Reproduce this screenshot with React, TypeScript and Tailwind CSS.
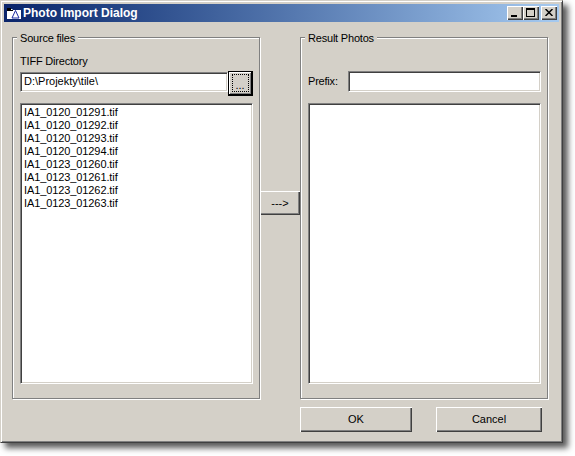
const sunken =
  'border border-t-[#808080] border-l-[#808080] border-b-white border-r-white shadow-[inset_1px_1px_0_#404040,inset_-1px_-1px_0_#d4d0c8]';

const raised = 'bg-[#d4d0c8] shadow-[inset_1px_1px_0_#fff,inset_-1px_-1px_0_#404040,inset_-2px_-2px_0_#808080]';

const files = [
  'IA1_0120_01291.tif',
  'IA1_0120_01292.tif',
  'IA1_0120_01293.tif',
  'IA1_0120_01294.tif',
  'IA1_0123_01260.tif',
  'IA1_0123_01261.tif',
  'IA1_0123_01262.tif',
  'IA1_0123_01263.tif',
];

function CaptionButton({ children, className = '' }: { children: React.ReactNode; className?: string }) {
  return <div className={`flex h-[14px] w-[16px] items-center justify-center ${raised} ${className}`}>{children}</div>;
}

function Group({ title, children }: { title: string; children: React.ReactNode }) {
  return (
    <div className="h-[362px] w-[248px] shrink-0 border border-[#808080] shadow-[inset_1px_1px_0_#fff,1px_1px_0_#fff]">
      <div className="-mt-[6px] ml-[4px] h-[13px] w-fit bg-[#d4d0c8] px-[3px] text-[11px] leading-[13px] tracking-[-0.2px]">{title}</div>
      {children}
    </div>
  );
}

export default function App() {
  return (
    <div className="h-[456px] w-[575px] bg-white font-['Liberation_Sans',sans-serif] text-[11px] text-black">
      <div className="h-[443px] w-[563px] border border-t-[#d4d0c8] border-r-[#404040] border-b-[#404040] border-l-[#d4d0c8] bg-[#d4d0c8] p-[3px] shadow-[inset_1px_1px_0_#fff,inset_-1px_-1px_0_#808080,5px_5px_6px_#5a5a5a]">
        {/* title bar */}
        <div className="flex h-[18px] items-center bg-gradient-to-r from-[#0a246a] to-[#a6caf0] pr-[2px] pl-[3px]">
          <svg width="14" height="11" viewBox="0 0 14 11" className="mr-[2px] shrink-0">
            <path d="M0 1h5l1 1h8v9H0z" fill="#fff" />
            <path d="M0 0h4v2H0z" fill="#000" />
            <path d="M0 2h6v1H0z" fill="#000" />
            <path d="M8.5 2.5L12 10H5z" fill="none" stroke="#1a2aa0" strokeWidth="1" />
          </svg>
          <span className="flex-1 text-[12px] leading-[14px] font-bold text-white">Photo Import Dialog</span>
          <CaptionButton>
            <div className="mt-[6px] mr-[2px] h-[2px] w-[6px] bg-black" />
          </CaptionButton>
          <CaptionButton>
            <div className="mr-[1px] mb-[1px] h-[9px] w-[9px] border border-t-2 border-black" />
          </CaptionButton>
          <CaptionButton className="ml-[2px]">
            <svg width="8" height="7" viewBox="0 0 8 7" className="mr-[1px] mb-[1px]">
              <path d="M0.5 0l7 7M7.5 0l-7 7" stroke="#000" strokeWidth="1.5" />
            </svg>
          </CaptionButton>
        </div>

        {/* groups */}
        <div className="mt-[15px] ml-[8px] flex items-start">
          <Group title="Source files">
            <div className="px-[7px]">
              <div className="mt-[10px] leading-[13px] tracking-[-0.2px]">TIFF Directory</div>
              <div className="mt-[3px] flex w-[233px] items-start">
                <div className={`mt-px h-[20px] w-[208px] shrink-0 bg-white pl-[3px] leading-[17px] ${sunken}`}>D:\Projekty\tile\</div>
                <div className="flex h-[25px] w-[25px] shrink-0 items-center justify-center border border-r-2 border-b-2 border-black bg-[#d4d0c8] shadow-[inset_1px_1px_0_#fff,inset_-1px_-1px_0_#808080]">
                  <div className="flex h-[18px] w-[17px] items-end justify-center border border-dotted border-black pb-[1px] leading-[9px]">...</div>
                </div>
              </div>
              <div className={`mt-[7px] h-[281px] w-[233px] bg-white pt-[2px] pl-[3px] leading-[13px] tracking-[-0.1px] ${sunken}`}>
                {files.map((f) => (
                  <div key={f}>{f}</div>
                ))}
              </div>
            </div>
          </Group>

          <div className={`mt-[154px] flex h-[24px] w-[40px] shrink-0 items-center justify-center ${raised}`}>---&gt;</div>

          <Group title="Result Photos">
            <div className="px-[7px]">
              <div className="mt-[26px] flex w-[233px] items-center">
                <span className="w-[40px] shrink-0 tracking-[-0.2px]">Prefix:</span>
                <div className={`h-[21px] w-[193px] shrink-0 bg-white ${sunken}`} />
              </div>
              <div className={`mt-[11px] h-[281px] w-[233px] bg-white ${sunken}`} />
            </div>
          </Group>
        </div>

        {/* footer */}
        <div className="mt-[8px] ml-[296px] flex gap-[24px]">
          <div className={`flex h-[25px] w-[112px] items-center justify-center ${raised}`}>OK</div>
          <div className={`flex h-[25px] w-[106px] items-center justify-center ${raised}`}>Cancel</div>
        </div>
      </div>
    </div>
  );
}
